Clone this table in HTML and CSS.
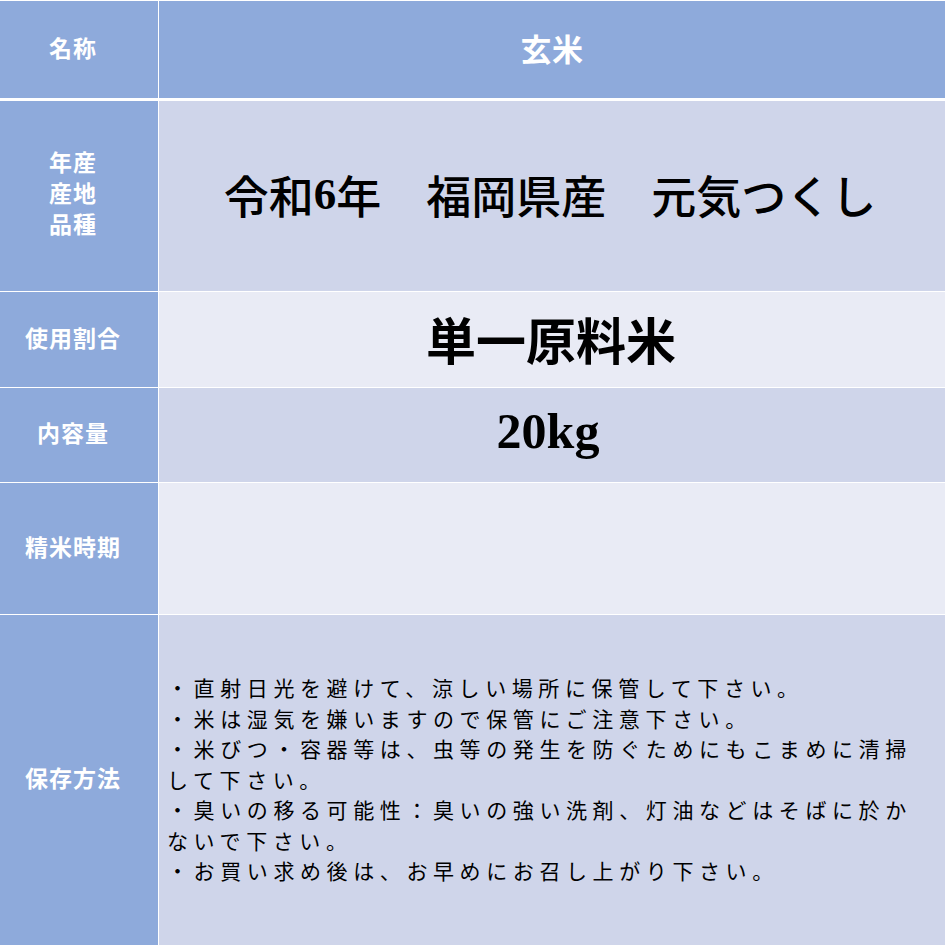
FILE: index.html
```html
<!DOCTYPE html>
<html lang="ja">
<head>
<meta charset="utf-8">
<title>玄米</title>
<link rel="stylesheet" href="styles.css">
</head>
<body>
<div class="table">
  <div class="row row-head">
    <div class="label">名称</div>
    <div class="cell cell-head">玄米</div>
  </div>
  <div class="row row-origin band-a">
    <div class="label label-multi">年産<br>産地<br>品種</div>
    <div class="cell cell-origin">令和<span class="num">6</span>年　福岡県産　元気つくし</div>
  </div>
  <div class="row row-ratio band-b">
    <div class="label">使用割合</div>
    <div class="cell cell-big">単一原料米</div>
  </div>
  <div class="row row-amount band-a">
    <div class="label">内容量</div>
    <div class="cell cell-amount">20kg</div>
  </div>
  <div class="row row-date band-b">
    <div class="label">精米時期</div>
    <div class="cell"></div>
  </div>
  <div class="row row-store band-a">
    <div class="label">保存方法</div>
    <div class="cell cell-notes">
      <p class="notes">・直射日光を避けて、涼しい場所に保管して下さい。<br>・米は湿気を嫌いますので保管にご注意下さい。<br>・米びつ・容器等は、虫等の発生を防ぐためにもこまめに清掃して下さい。<br>・臭いの移る可能性：臭いの強い洗剤、灯油などはそばに於かないで下さい。<br>・お買い求め後は、お早めにお召し上がり下さい。</p>
    </div>
  </div>
</div>
</body>
</html>
```

FILE: styles.css
```css
html, body {
  margin: 0;
  padding: 0;
  background: #ffffff;
}

body {
  width: 945px;
  height: 945px;
  overflow: hidden;
  font-family: "Noto Sans CJK JP", sans-serif;
}

.table {
  display: flex;
  flex-direction: column;
  gap: 1px;
  padding-top: 1px;
  height: 945px;
  box-sizing: border-box;
}

.row {
  display: grid;
  grid-template-columns: 158px 1fr;
  gap: 1px;
}

.row-head { height: 97px; margin-bottom: 2px; }
.row-origin { height: 190px; }
.row-ratio { height: 95px; }
.row-amount { height: 94px; }
.row-date { height: 131px; }
.row-store { flex: 1; }

.label {
  background: #8eaadb;
  color: #ffffff;
  font-weight: 700;
  font-size: 23px;
  letter-spacing: 1px;
  display: flex;
  align-items: center;
  justify-content: center;
  text-align: center;
  line-height: 1.2;
  padding-right: 12px;
  padding-bottom: 4px;
}

.label-multi {
  line-height: 31px;
  padding-bottom: 8px;
}

.cell {
  display: flex;
  align-items: center;
  justify-content: center;
  color: #000000;
}

.row-head .cell { background: #8eaadb; }
.band-a .cell { background: #cfd5ea; }
.band-b .cell { background: #e9ebf5; }

.cell-head {
  color: #ffffff;
  font-weight: 700;
  font-size: 31px;
  letter-spacing: 0.5px;
  padding-bottom: 4px;
}

.cell-origin {
  font-size: 45px;
  font-weight: 500;
  padding-bottom: 4px;
  padding-right: 4px;
}

.num {
  font-family: "Liberation Serif", serif;
  font-weight: 700;
}

.cell-big {
  font-size: 50px;
  font-weight: 700;
  padding-bottom: 4px;
  padding-right: 2px;
}

.cell-amount {
  font-family: "Liberation Serif", serif;
  font-size: 50px;
  font-weight: 700;
  padding-bottom: 8px;
  padding-right: 8px;
}

.cell-notes {
  justify-content: flex-start;
  padding-left: 8px;
  padding-right: 20px;
}

.notes {
  margin: 0;
  font-size: 21px;
  letter-spacing: 5.6px;
  line-height: 30.5px;
  width: 760px;
  padding-bottom: 2px;
}
```
